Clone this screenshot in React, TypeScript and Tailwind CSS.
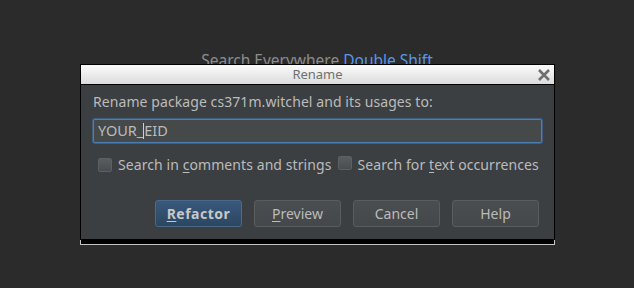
import React, { useState } from 'react';

const font = { fontFamily: '"Noto Sans", "DejaVu Sans", sans-serif' };

const Checkbox: React.FC<{ checked: boolean; onToggle: () => void }> = ({ checked, onToggle }) => (
  <span
    onClick={onToggle}
    className="inline-flex w-[14px] h-[14px] rounded-[2px] border border-[#5d5f60] bg-gradient-to-b from-[#5a5d5f] to-[#4a4d4f] items-center justify-center shrink-0"
  >
    {checked && <span className="text-[10px] leading-none text-[#bbbbbb]">✓</span>}
  </span>
);

const DialogButton: React.FC<{ label: string; mnemonic?: number; primary?: boolean }> = ({
  label,
  mnemonic,
  primary,
}) => {
  const text =
    mnemonic === undefined ? (
      label
    ) : (
      <>
        {label.slice(0, mnemonic)}
        <span className="underline underline-offset-2">{label[mnemonic]}</span>
        {label.slice(mnemonic + 1)}
      </>
    );
  return (
    <button
      className={`w-[87px] h-[27px] rounded-[3px] border text-[14px] leading-none ${
        primary
          ? 'border-[#4b6a8a] bg-gradient-to-b from-[#38597d] to-[#2c4660] text-[#c8c8c8] font-bold tracking-[0.5px]'
          : 'border-[#5a5d5f] bg-gradient-to-b from-[#4a4e50] to-[#44484a] text-[#bbbbbb]'
      }`}
    >
      {text}
    </button>
  );
};

export default function App() {
  const [inComments, setInComments] = useState(false);
  const [inText, setInText] = useState(false);

  return (
    <div className="relative w-[634px] h-[288px] bg-[#2b2b2b] overflow-hidden" style={font}>
      <div className="pt-[50px] text-center text-[15.5px] leading-[20px]">
        <span className="text-[#8c8c8c]">Search Everywhere</span>{' '}
        <span className="text-[#5896e8]">Double Shift</span>
      </div>

      {/* modal window over the editor */}
      <div className="absolute left-[80px] top-[64px] w-[475px]">
        <div className="border border-black">
          <div className="relative h-[20px] bg-gradient-to-b from-[#fbfbfb] to-[#dcdcdc] border-b border-black flex items-center justify-center">
            <span className="text-[13px] text-[#707070]">Rename</span>
            <svg className="absolute right-[3px] top-[3px]" width="14" height="14" viewBox="0 0 14 14">
              <path d="M2 2 L12 12 M12 2 L2 12" stroke="#6e6e6e" strokeWidth="2.6" />
            </svg>
          </div>

          <div className="bg-[#3c3f41] px-[12px] pt-[7px] pb-[10px]">
            <div className="text-[14px] leading-[20px] text-[#bbbbbb] tracking-[0.08px]">
              Rename package cs371m.witchel and its usages to:
            </div>

            <div className="mt-[7px] h-[24px] rounded-[2px] border border-[#4a7fb5] bg-[#45494a] flex items-center px-[4px] text-[14.5px] text-[#bbbbbb] shadow-[0_0_0_1px_#3d5e80]">
              <span>YOUR_</span>
              <span className="w-px h-[16px] bg-[#cfcfcf]" />
              <span>EID</span>
            </div>

            <div className="mt-[13px] flex items-center pl-[5px] text-[14px] leading-[18px] text-[#bbbbbb] tracking-[0.08px]">
              <Checkbox checked={inComments} onToggle={() => setInComments(!inComments)} />
              <span className="ml-[6px]">
                Search in <span className="underline underline-offset-2">c</span>omments and strings
              </span>
              <span className="ml-[7px]">
                <Checkbox checked={inText} onToggle={() => setInText(!inText)} />
              </span>
              <span className="ml-[5px]">
                Search for <span className="underline underline-offset-2">t</span>ext occurrences
              </span>
            </div>

            <div className="mt-[26px] pb-[2px] flex justify-end gap-[12px] pr-[3px]">
              <DialogButton label="Refactor" mnemonic={0} primary />
              <DialogButton label="Preview" mnemonic={0} />
              <DialogButton label="Cancel" />
              <DialogButton label="Help" />
            </div>
          </div>
        </div>
        <div className="h-[5px] bg-black border-x border-b border-[#c4c4c4]" />
      </div>
    </div>
  );
}
